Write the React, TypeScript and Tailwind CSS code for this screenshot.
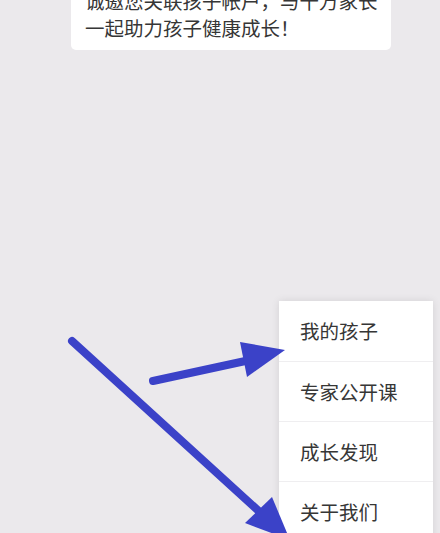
import React from "react";

export default function App() {
  const items = ["我的孩子", "专家公开课", "成长发现", "关于我们"];
  return (
    <div
      className="relative w-[440px] h-[533px] overflow-hidden bg-[#ebe9ec]"
      style={{ fontFamily: '"Noto Sans CJK SC", "Noto Sans", sans-serif' }}
    >
      <div className="ml-[71px] mt-[-19px] w-[320px] rounded-[5px] bg-white pl-[14px] pr-[4px] pt-[6px] pb-[9px]">
        <p className="whitespace-nowrap text-[19.5px] leading-[27px] text-[#363636]">
          诚邀您关联孩子帐户，与千万家长
          <br />
          一起助力孩子健康成长！
        </p>
      </div>

      <div className="absolute left-[279px] top-[301px] w-[154px] bg-white shadow-[0_0_8px_rgba(0,0,0,0.10)]">
        {items.map((t, i) => (
          <div
            key={t}
            className={
              "flex h-[60px] items-center pl-[21px] text-[19.5px] text-[#363636] " +
              (i > 0 ? "border-t border-[#efeef0]" : "")
            }
          >
            {t}
          </div>
        ))}
      </div>

      <svg
        className="absolute left-0 top-0"
        width="440"
        height="533"
        viewBox="0 0 440 533"
      >
        <line
          x1="153"
          y1="381"
          x2="250"
          y2="360"
          stroke="#3b42c8"
          strokeWidth="8"
          strokeLinecap="round"
        />
        <polygon points="240,342 285,350 247,377" fill="#3b42c8" />
        <line
          x1="72"
          y1="341"
          x2="262"
          y2="514"
          stroke="#3b42c8"
          strokeWidth="8"
          strokeLinecap="round"
        />
        <polygon points="245,523 272,497 290,540" fill="#3b42c8" />
      </svg>
    </div>
  );
}
